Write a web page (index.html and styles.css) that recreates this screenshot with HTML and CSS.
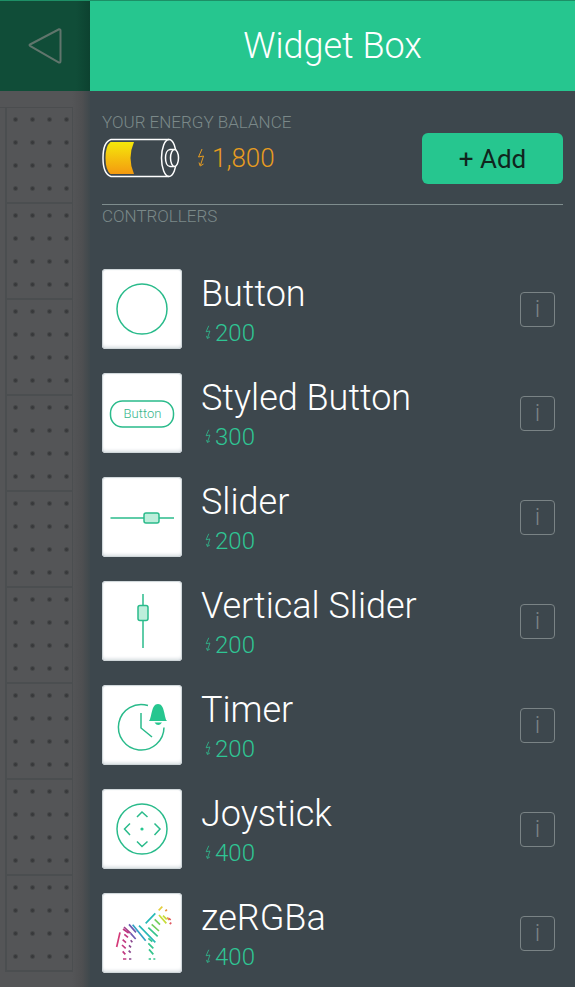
FILE: index.html
```html
<!DOCTYPE html>
<html lang="en">
<head>
<meta charset="utf-8">
<meta name="viewport" content="width=device-width, initial-scale=1">
<title>Widget Box</title>
<link rel="stylesheet" href="styles.css">
</head>
<body>
<svg class="defs" aria-hidden="true">
  <symbol id="bolt" viewBox="0 0 8 20"><path d="M5 1 1.500 9 6.500 8 3.500 17M2 14.500 3.200 18 6.500 16" /></symbol>
</svg>
<div class="app">
  <aside class="project">
    <div class="project-bar">
      <button class="back" aria-label="Back">
        <svg width="34" height="38" viewBox="0 0 34 38"><path d="M2 17.500 31 2.300Q32.500 2 32.500 3.500V34Q32.500 36 31 35.500L2 18.800Q1 18 2 17.500Z"/></svg>
      </button>
    </div>
    <div class="board">
      <div class="cell"></div><div class="cell"></div><div class="cell"></div>
      <div class="cell"></div><div class="cell"></div><div class="cell"></div>
      <div class="cell"></div><div class="cell"></div><div class="cell"></div>
    </div>
  </aside>
  <main class="panel">
    <header class="panel-bar"><h1>Widget Box</h1></header>
    <div class="content">
      <section class="energy">
        <div>
          <h2 class="label">YOUR ENERGY BALANCE</h2>
          <div class="balance">
            <svg class="battery" width="78" height="40" viewBox="0 0 78 40">
              <defs><linearGradient id="charge" x1="0" y1="0" x2="0" y2="1"><stop offset="0" stop-color="#f5e80a"/><stop offset="1" stop-color="#f49a10"/></linearGradient></defs>
              <path fill="url(#charge)" d="M8.500 4H32Q25 20 32 36H8.500Q3.500 32 3.500 20T8.500 4Z"/>
              <g fill="none" stroke="#fff" stroke-width="1.500"><path d="M67 1.500H9Q1 4 1 20T9 38.500H67"/><ellipse cx="67" cy="20" rx="7.500" ry="18.500"/></g>
              <path fill="#3d474d" stroke="#fff" stroke-width="1.500" d="M72 11.500H68C62 12 62 28 68 28.500H72"/>
              <ellipse cx="72.500" cy="20" rx="4" ry="8.500" fill="#3d474d" stroke="#fff" stroke-width="1.500"/>
            </svg>
            <svg class="bolt bolt-large"><use href="#bolt"/></svg>
            <span>1,800</span>
          </div>
        </div>
        <button class="add">+ Add</button>
      </section>
      <h2 class="label section-label">CONTROLLERS</h2>
      <ul class="widgets">
        <li class="widget">
          <svg class="tile" viewBox="0 0 80 80"><circle cx="40" cy="40" r="25"/></svg>
          <div class="info"><h3>Button</h3><p><svg class="bolt"><use href="#bolt"/></svg>200</p></div>
          <button class="details" aria-label="About Button">i</button>
        </li>
        <li class="widget">
          <svg class="tile" viewBox="0 0 80 80"><rect x="8.500" y="28" width="63" height="26" rx="12"/><text x="40.500" y="45" text-anchor="middle">Button</text></svg>
          <div class="info"><h3>Styled Button</h3><p><svg class="bolt"><use href="#bolt"/></svg>300</p></div>
          <button class="details" aria-label="About Styled Button">i</button>
        </li>
        <li class="widget">
          <svg class="tile" viewBox="0 0 80 80"><path d="M8.500 41H72"/><rect class="knob" x="42" y="36" width="15" height="10" rx="2"/></svg>
          <div class="info"><h3>Slider</h3><p><svg class="bolt"><use href="#bolt"/></svg>200</p></div>
          <button class="details" aria-label="About Slider">i</button>
        </li>
        <li class="widget">
          <svg class="tile" viewBox="0 0 80 80"><path d="M41 13V67"/><rect class="knob" x="36" y="24.500" width="10" height="15" rx="2"/></svg>
          <div class="info"><h3>Vertical Slider</h3><p><svg class="bolt"><use href="#bolt"/></svg>200</p></div>
          <button class="details" aria-label="About Vertical Slider">i</button>
        </li>
        <li class="widget">
          <svg class="tile" viewBox="0 0 80 80"><path d="M46 20.500A22.800 22.800 0 1 0 62 42.500M39 28V43L50 52"/><path class="solid" d="M47 36C50 33 49 19 56 19S62 33 65 36ZM52.500 37.500H60Q58 40 56.200 40T52.500 37.500Z"/></svg>
          <div class="info"><h3>Timer</h3><p><svg class="bolt"><use href="#bolt"/></svg>200</p></div>
          <button class="details" aria-label="About Timer">i</button>
        </li>
        <li class="widget">
          <svg class="tile" viewBox="0 0 80 80"><circle cx="40" cy="40" r="25"/><path d="M35 28 40 23 45.500 28M35 52.500 40 57.500 45.500 52.500M28 34.500 22.500 40 28 46M52.500 34.500 58 40 52.500 46"/><circle class="solid" cx="40" cy="40" r="1.600"/></svg>
          <div class="info"><h3>Joystick</h3><p><svg class="bolt"><use href="#bolt"/></svg>400</p></div>
          <button class="details" aria-label="About Joystick">i</button>
        </li>
        <li class="widget">
          <svg class="tile" viewBox="0 0 240 240"><g class="zebra" transform="translate(-21 -27)">
            <path stroke="#d43a78" d="M75 145 65 189"/>
            <path stroke="#a0418e" d="M87 129 107 148"/>
            <path stroke="#6e5bb0" d="M102 121 123 145M107 148 122 165"/>
            <path stroke="#c13880" d="M84 135 101 147M88 151 99 160M83 167 93 176M81 183 92 193M83 202 91 211M84 225H94"/>
            <path stroke="#87458c" d="M107 169 112 175M102 184 108 190M101 200 107 206M102 225H109"/>
            <path stroke="#319fc4" d="M113 122 152 170"/>
            <path stroke="#27b9b7" d="M132 125 181 175M152 118 181 88"/>
            <path stroke="#36c58d" d="M160 131 188 157M160 163 172 173M160 178 175 193M162 196 175 211M161 225H168M175 225H181"/>
            <path stroke="#73ce5c" d="M170 121 192 141M179 106 195 122"/>
            <path stroke="#c7dc39" d="M192 93 214 118M204 95 215 106"/>
            <path stroke="#e3ce3d" d="M191 79 202 68"/>
            <path stroke="#e6963f" d="M211 81 216 77M217 100 222 108"/>
            <path stroke="#df5962" d="M222 103 227 108M224 120 229 116"/>
          </g></svg>
          <div class="info"><h3>zeRGBa</h3><p><svg class="bolt"><use href="#bolt"/></svg>400</p></div>
          <button class="details" aria-label="About zeRGBa">i</button>
        </li>
      </ul>
    </div>
  </main>
</div>
</body>
</html>
```
FILE: styles.css
```css
* { box-sizing: border-box; margin: 0; padding: 0; }
body {
  background: #3d474d;
  color: #fff;
  font-family: Roboto, "Liberation Sans", sans-serif;
  font-weight: 300;
}
button { font: inherit; }
h1, h2, h3 { font-weight: 300; }
.defs { display: none; }

.app {
  display: grid;
  grid-template-columns: 90px 1fr;
  min-height: 100vh;
}
.project {
  background: linear-gradient(90deg, #545557 72px, #4e4f51 82px, #3f484c);
}
.project-bar, .panel-bar {
  display: flex;
  align-items: center;
  height: 91px;
  border-top: 1px solid #1d8f66;
}
.project-bar {
  justify-content: flex-end;
  padding-right: 28px;
  background: linear-gradient(90deg, #104d38 76px, #0c4230);
}
.back {
  display: flex;
  border: 0;
  background: none;
}
.back path { fill: none; stroke: #60756c; stroke-width: 2; }
.board {
  width: 73px;
  margin-top: 16px;
  border-top: 1px solid #4b4d4f;
}
.cell {
  height: 96px;
  margin-left: 5px;
  padding: 0 0 4px;
  border: solid #4b4e50;
  border-width: 0 1px 2px 2px;
  background: radial-gradient(circle, #38393b 1px, transparent 3px) content-box 0 0 / 17px 23px;
}

.panel-bar {
  justify-content: center;
  background: #26c68f;
}
h1 { font-size: 36px; line-height: 44px; }
.content { padding: 20px 12px 13px; }
.energy {
  display: flex;
  justify-content: space-between;
  align-items: flex-end;
  padding-bottom: 20px;
  border-bottom: 1px solid #7f8d8e;
}
.label {
  color: #7b8989;
  font-size: 17px;
  line-height: 22px;
}
.section-label { margin-bottom: 42px; }
.balance {
  display: flex;
  align-items: center;
  height: 51px;
  padding-bottom: 1px;
  color: #e79c20;
  font-size: 26px;
}
.bolt {
  width: 6px;
  height: 15px;
  margin-right: 4px;
  fill: none;
  stroke: currentColor;
  stroke-width: 1;
}
.bolt-large {
  width: 8px;
  height: 20px;
  margin: 0 7px 0 17px;
}
.add {
  width: 141px;
  height: 51px;
  border: 0;
  border-radius: 6px;
  background: #26c68f;
  color: #10251d;
  font-size: 26px;
  font-weight: 400;
}

.widgets {
  display: grid;
  gap: 24px;
  list-style: none;
}
.widget {
  display: flex;
  align-items: center;
  height: 80px;
  padding-right: 8px;
}
.tile {
  flex: none;
  width: 80px;
  height: 80px;
  border-radius: 4px;
  background: #fff;
  box-shadow: inset 0 0 1px 1px #ccd4d8, inset 0 -3px 3px #e4e8eb;
  fill: none;
  stroke: #2abb8b;
  stroke-width: 1.500;
}
.tile text {
  fill: #35b58c;
  stroke: none;
  font-size: 13px;
}
.tile .knob { fill: #bdeedb; }
.tile .solid { fill: #26c68f; stroke: none; }
.tile .zebra { stroke-width: 5; }
.info {
  flex: 1;
  padding: 3px 0 0 19px;
}
h3 { font-size: 36px; line-height: 44px; }
.info p {
  display: flex;
  align-items: center;
  padding-left: 4px;
  color: #2fc594;
  font-size: 24px;
  line-height: 34px;
}
.details {
  width: 35px;
  height: 35px;
  border: 1px solid #7a8385;
  border-radius: 4px;
  background: none;
  color: #7a8385;
  font-size: 24px;
}
```
